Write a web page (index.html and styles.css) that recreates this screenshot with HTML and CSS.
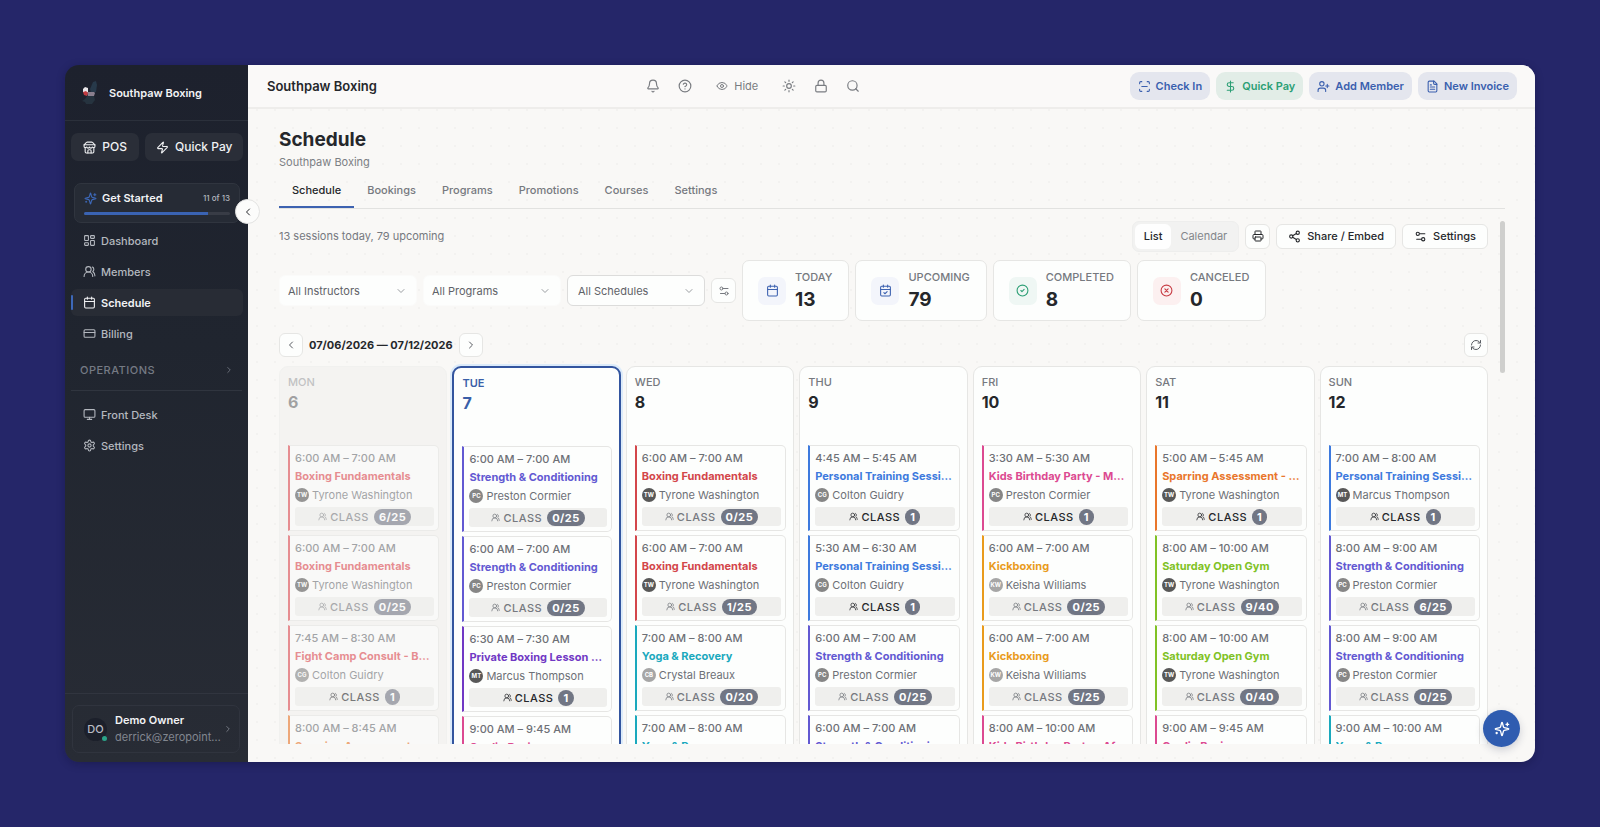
FILE: index.html
```html
<!DOCTYPE html>
<html lang="en">
<head>
<meta charset="utf-8">
<title>Schedule – Southpaw Boxing</title>
<link rel="stylesheet" href="styles.css">
</head>
<body>
<svg class="sprite" aria-hidden="true">
  <symbol id="i-store" viewBox="0 0 24 24"><path d="m2 7 4.41-4.41A2 2 0 0 1 7.83 2h8.34a2 2 0 0 1 1.42.59L22 7"/><path d="M4 12v8a2 2 0 0 0 2 2h12a2 2 0 0 0 2-2v-8"/><path d="M15 22v-4a2 2 0 0 0-2-2h-2a2 2 0 0 0-2 2v4"/><path d="M2 7h20v3a2 2 0 0 1-2 2 2.7 2.7 0 0 1-2.7-1 2.7 2.7 0 0 1-5.3 0 2.7 2.7 0 0 1-5.3 0A2.7 2.7 0 0 1 4 12a2 2 0 0 1-2-2z"/></symbol>
  <symbol id="i-zap" viewBox="0 0 24 24"><path d="M4 14a1 1 0 0 1-.78-1.63l9.9-10.2a.5.5 0 0 1 .86.46l-1.92 6.02A1 1 0 0 0 13 10h7a1 1 0 0 1 .78 1.63l-9.9 10.2a.5.5 0 0 1-.86-.46l1.92-6.02A1 1 0 0 0 11 14z"/></symbol>
  <symbol id="i-sparkles" viewBox="0 0 24 24"><path d="M9.94 15.5A2 2 0 0 0 8.5 14.06l-6.14-1.58a.5.5 0 0 1 0-.96L8.5 9.94A2 2 0 0 0 9.94 8.5l1.58-6.14a.5.5 0 0 1 .96 0l1.58 6.14a2 2 0 0 0 1.44 1.44l6.14 1.58a.5.5 0 0 1 0 .96l-6.14 1.58a2 2 0 0 0-1.44 1.44l-1.58 6.14a.5.5 0 0 1-.96 0z"/><path d="M20 3v4M22 5h-4M4 17v2M5 18H3"/></symbol>
  <symbol id="i-grid" viewBox="0 0 24 24"><rect x="3" y="3" width="7" height="9" rx="1"/><rect x="14" y="3" width="7" height="5" rx="1"/><rect x="14" y="12" width="7" height="9" rx="1"/><rect x="3" y="16" width="7" height="5" rx="1"/></symbol>
  <symbol id="i-users" viewBox="0 0 24 24"><path d="M18 21a8 8 0 0 0-16 0"/><circle cx="10" cy="8" r="5"/><path d="M22 20c0-3.370-2-6.500-4-8a5 5 0 0 0-.45-8.300"/></symbol>
  <symbol id="i-calendar" viewBox="0 0 24 24"><path d="M8 2v4M16 2v4M3 10h18"/><rect x="3" y="4" width="18" height="18" rx="2"/></symbol>
  <symbol id="i-calcheck" viewBox="0 0 24 24"><path d="M8 2v4M16 2v4M3 10h18M9 16l2 2 4-4"/><rect x="3" y="4" width="18" height="18" rx="2"/></symbol>
  <symbol id="i-card" viewBox="0 0 24 24"><rect x="2" y="5" width="20" height="14" rx="2"/><path d="M2 10h20"/></symbol>
  <symbol id="i-monitor" viewBox="0 0 24 24"><rect x="2" y="3" width="20" height="14" rx="2"/><path d="M8 21h8M12 17v4"/></symbol>
  <symbol id="i-gear" viewBox="0 0 24 24"><path d="M12.220 2h-.44a2 2 0 0 0-2 2v.18a2 2 0 0 1-1 1.730l-.43.25a2 2 0 0 1-2 0l-.15-.08a2 2 0 0 0-2.730.73l-.22.380a2 2 0 0 0 .73 2.730l.15.1a2 2 0 0 1 1 1.720v.51a2 2 0 0 1-1 1.740l-.15.090a2 2 0 0 0-.73 2.730l.22.380a2 2 0 0 0 2.730.73l.15-.08a2 2 0 0 1 2 0l.43.25a2 2 0 0 1 1 1.730V20a2 2 0 0 0 2 2h.44a2 2 0 0 0 2-2v-.18a2 2 0 0 1 1-1.730l.43-.25a2 2 0 0 1 2 0l.15.080a2 2 0 0 0 2.730-.73l.22-.390a2 2 0 0 0-.73-2.730l-.15-.08a2 2 0 0 1-1-1.740v-.5a2 2 0 0 1 1-1.740l.15-.090a2 2 0 0 0 .73-2.730l-.22-.380a2 2 0 0 0-2.730-.73l-.15.080a2 2 0 0 1-2 0l-.43-.25a2 2 0 0 1-1-1.730V4a2 2 0 0 0-2-2z"/><circle cx="12" cy="12" r="3"/></symbol>
  <symbol id="i-right" viewBox="0 0 24 24"><path d="m9 18 6-6-6-6"/></symbol>
  <symbol id="i-left" viewBox="0 0 24 24"><path d="m15 18-6-6 6-6"/></symbol>
  <symbol id="i-down" viewBox="0 0 24 24"><path d="m6 9 6 6 6-6"/></symbol>
  <symbol id="i-bell" viewBox="0 0 24 24"><path d="M10.270 21a2 2 0 0 0 3.460 0"/><path d="M3.260 15.330A1 1 0 0 0 4 17h16a1 1 0 0 0 .74-1.670C19.410 13.960 18 12.500 18 8A6 6 0 0 0 6 8c0 4.500-1.410 5.960-2.740 7.330"/></symbol>
  <symbol id="i-help" viewBox="0 0 24 24"><circle cx="12" cy="12" r="10"/><path d="M9.090 9a3 3 0 0 1 5.830 1c0 2-3 3-3 3M12 17h.01"/></symbol>
  <symbol id="i-eye" viewBox="0 0 24 24"><path d="M2.060 12.350a1 1 0 0 1 0-.7 10.750 10.750 0 0 1 19.880 0 1 1 0 0 1 0 .7 10.750 10.750 0 0 1-19.880 0"/><circle cx="12" cy="12" r="3"/></symbol>
  <symbol id="i-sun" viewBox="0 0 24 24"><circle cx="12" cy="12" r="4"/><path d="M12 2v2M12 20v2M4.900 4.900l1.400 1.400M17.700 17.700l1.400 1.400M2 12h2M20 12h2M6.300 17.700l-1.400 1.400M19.100 4.900l-1.400 1.400"/></symbol>
  <symbol id="i-lock" viewBox="0 0 24 24"><rect x="3" y="11" width="18" height="11" rx="2"/><path d="M7 11V7a5 5 0 0 1 10 0v4"/></symbol>
  <symbol id="i-search" viewBox="0 0 24 24"><circle cx="11" cy="11" r="8"/><path d="m21 21-4.300-4.300"/></symbol>
  <symbol id="i-scan" viewBox="0 0 24 24"><path d="M3 7V5a2 2 0 0 1 2-2h2M17 3h2a2 2 0 0 1 2 2v2M21 17v2a2 2 0 0 1-2 2h-2M7 21H5a2 2 0 0 1-2-2v-2M7 12h10"/></symbol>
  <symbol id="i-dollar" viewBox="0 0 24 24"><path d="M12 2v20M17 5H9.500a3.500 3.500 0 0 0 0 7h5a3.500 3.500 0 0 1 0 7H6"/></symbol>
  <symbol id="i-userplus" viewBox="0 0 24 24"><path d="M16 21v-2a4 4 0 0 0-4-4H6a4 4 0 0 0-4 4v2"/><circle cx="9" cy="7" r="4"/><path d="M19 8v6M22 11h-6"/></symbol>
  <symbol id="i-file" viewBox="0 0 24 24"><path d="M15 2H6a2 2 0 0 0-2 2v16a2 2 0 0 0 2 2h12a2 2 0 0 0 2-2V7z"/><path d="M14 2v4a2 2 0 0 0 2 2h4M10 9H8M16 13H8M16 17H8"/></symbol>
  <symbol id="i-printer" viewBox="0 0 24 24"><path d="M6 18H4a2 2 0 0 1-2-2v-5a2 2 0 0 1 2-2h16a2 2 0 0 1 2 2v5a2 2 0 0 1-2 2h-2"/><path d="M6 9V3a1 1 0 0 1 1-1h10a1 1 0 0 1 1 1v6"/><rect x="6" y="14" width="12" height="8" rx="1"/></symbol>
  <symbol id="i-share" viewBox="0 0 24 24"><circle cx="18" cy="5" r="3"/><circle cx="6" cy="12" r="3"/><circle cx="18" cy="19" r="3"/><path d="m8.590 13.510 6.830 3.980M15.410 6.510l-6.820 3.980"/></symbol>
  <symbol id="i-sliders" viewBox="0 0 24 24"><path d="M20 7h-9M14 17H5"/><circle cx="17" cy="17" r="3"/><circle cx="7" cy="7" r="3"/></symbol>
  <symbol id="i-ok" viewBox="0 0 24 24"><circle cx="12" cy="12" r="10"/><path d="m9 12 2 2 4-4"/></symbol>
  <symbol id="i-no" viewBox="0 0 24 24"><circle cx="12" cy="12" r="10"/><path d="m15 9-6 6M9 9l6 6"/></symbol>
  <symbol id="i-refresh" viewBox="0 0 24 24"><path d="M3 12a9 9 0 0 1 9-9 9.750 9.750 0 0 1 6.740 2.740L21 8M21 3v5h-5M21 12a9 9 0 0 1-9 9 9.750 9.750 0 0 1-6.740-2.740L3 16M8 16H3v5"/></symbol>
</svg>

<div class="app">
  <aside class="sidebar">
    <div class="brand">
      <svg class="brand-logo" viewBox="0 0 18 24" aria-hidden="true">
        <path class="logo-dark" d="M9 8 12 1l3-1 1 4-1 7-5 1z"/>
        <path class="logo-mid" d="M1 20l3-2 3-4 6 1 1 4-3 4H5l-1-2z"/>
        <path class="logo-light" d="M2 8l2-2 3 1v4l-2 1-3-1z"/>
        <path class="logo-pink" d="M6 11h7l1 1-1 3H7z"/>
        <path class="logo-red" d="M2 11l3-1 2 2-1 3-3-1z"/>
      </svg>
      <span class="brand-name">Southpaw Boxing</span>
    </div>
    <div class="quick">
      <button class="quick-btn"><svg class="ic ic-13"><use href="#i-store"/></svg>POS</button>
      <button class="quick-btn quick-wide"><svg class="ic ic-13"><use href="#i-zap"/></svg>Quick Pay</button>
    </div>
    <div class="started">
      <div class="started-row"><svg class="ic ic-13 accent"><use href="#i-sparkles"/></svg><span>Get Started</span><small>11 of 13</small></div>
      <div class="progress"><div class="progress-fill" style="width:85%"></div></div>
    </div>
    <nav class="nav">
      <a class="nav-item" href="#"><svg class="ic ic-13"><use href="#i-grid"/></svg>Dashboard</a>
      <a class="nav-item" href="#"><svg class="ic ic-13"><use href="#i-users"/></svg>Members</a>
      <a class="nav-item active" href="#"><svg class="ic ic-13"><use href="#i-calendar"/></svg>Schedule</a>
      <a class="nav-item" href="#"><svg class="ic ic-13"><use href="#i-card"/></svg>Billing</a>
    </nav>
    <button class="nav-group">OPERATIONS<svg class="ic ic-10"><use href="#i-right"/></svg></button>
    <nav class="nav nav-second">
      <a class="nav-item" href="#"><svg class="ic ic-13"><use href="#i-monitor"/></svg>Front Desk</a>
      <a class="nav-item" href="#"><svg class="ic ic-13"><use href="#i-gear"/></svg>Settings</a>
    </nav>
    <div class="account">
      <button class="account-card">
        <span class="account-avatar">DO</span>
        <span class="account-text"><b>Demo Owner</b><span>derrick@zeropoint.dev</span></span>
        <svg class="ic ic-10"><use href="#i-right"/></svg>
      </button>
    </div>
    <button class="collapse" aria-label="Collapse sidebar"><svg class="ic ic-12"><use href="#i-left"/></svg></button>
  </aside>

  <div class="main">
    <header class="topbar">
      <span class="topbar-title">Southpaw Boxing</span>
      <div class="tools">
        <button class="tool" aria-label="Notifications"><svg class="ic ic-14"><use href="#i-bell"/></svg></button>
        <button class="tool" aria-label="Help"><svg class="ic ic-14"><use href="#i-help"/></svg></button>
        <button class="tool tool-text"><svg class="ic ic-12"><use href="#i-eye"/></svg>Hide</button>
        <button class="tool" aria-label="Theme"><svg class="ic ic-14"><use href="#i-sun"/></svg></button>
        <button class="tool" aria-label="Lock"><svg class="ic ic-14"><use href="#i-lock"/></svg></button>
        <button class="tool" aria-label="Search"><svg class="ic ic-14"><use href="#i-search"/></svg></button>
      </div>
      <div class="actions">
        <button class="action"><svg class="ic ic-13"><use href="#i-scan"/></svg>Check In</button>
        <button class="action action-green"><svg class="ic ic-13"><use href="#i-dollar"/></svg>Quick Pay</button>
        <button class="action"><svg class="ic ic-13"><use href="#i-userplus"/></svg>Add Member</button>
        <button class="action"><svg class="ic ic-13"><use href="#i-file"/></svg>New Invoice</button>
      </div>
    </header>

    <main class="page">
      <h1 class="page-title">Schedule</h1>
      <p class="page-sub">Southpaw Boxing</p>
      <div class="tabs" role="tablist">
        <button class="tab selected" role="tab" aria-selected="true">Schedule</button>
        <button class="tab" role="tab">Bookings</button>
        <button class="tab" role="tab">Programs</button>
        <button class="tab" role="tab">Promotions</button>
        <button class="tab" role="tab">Courses</button>
        <button class="tab" role="tab">Settings</button>
      </div>
      <div class="scroller">
        <div class="schedule">
          <div class="bar">
            <p class="summary">13 sessions today, 79 upcoming</p>
            <div class="toggle"><button class="toggle-btn on">List</button><button class="toggle-btn">Calendar</button></div>
            <button class="btn btn-icon" aria-label="Print"><svg class="ic ic-12"><use href="#i-printer"/></svg></button>
            <button class="btn"><svg class="ic ic-13"><use href="#i-share"/></svg>Share / Embed</button>
            <button class="btn"><svg class="ic ic-13"><use href="#i-sliders"/></svg>Settings</button>
          </div>
          <div class="filters">
            <div class="pick"><select aria-label="Instructor"><option>All Instructors</option></select><svg class="ic ic-12"><use href="#i-down"/></svg></div>
            <div class="pick"><select aria-label="Program"><option>All Programs</option></select><svg class="ic ic-12"><use href="#i-down"/></svg></div>
            <div class="pick outlined"><select aria-label="Schedule"><option>All Schedules</option></select><svg class="ic ic-12"><use href="#i-down"/></svg></div>
            <button class="btn btn-icon muted" aria-label="Filters"><svg class="ic ic-12"><use href="#i-sliders"/></svg></button>
            <div class="stat"><span class="tile"><svg class="ic ic-13"><use href="#i-calendar"/></svg></span><div><div class="stat-label">TODAY</div><div class="stat-value">13</div></div></div>
            <div class="stat"><span class="tile"><svg class="ic ic-13"><use href="#i-calcheck"/></svg></span><div><div class="stat-label">UPCOMING</div><div class="stat-value">79</div></div></div>
            <div class="stat"><span class="tile tile-green"><svg class="ic ic-13"><use href="#i-ok"/></svg></span><div><div class="stat-label">COMPLETED</div><div class="stat-value">8</div></div></div>
            <div class="stat"><span class="tile tile-red"><svg class="ic ic-13"><use href="#i-no"/></svg></span><div><div class="stat-label">CANCELED</div><div class="stat-value">0</div></div></div>
          </div>
          <div class="dates">
            <button class="btn btn-step" aria-label="Previous week"><svg class="ic ic-12"><use href="#i-left"/></svg></button>
            <span class="range">07/06/2026 — 07/12/2026</span>
            <button class="btn btn-step" aria-label="Next week"><svg class="ic ic-12"><use href="#i-right"/></svg></button>
            <button class="btn btn-step push" aria-label="Refresh"><svg class="ic ic-12"><use href="#i-refresh"/></svg></button>
          </div>
          <div class="week">
            <section class="day past">
              <header class="day-head"><div class="day-name">MON</div><div class="day-num">6</div></header>
              <article class="card red"><div class="time">6:00 AM – 7:00 AM</div><div class="name">Boxing Fundamentals</div><div class="coach"><i class="av dark">TW</i>Tyrone Washington</div><div class="seats"><svg class="ic ic-9"><use href="#i-users"/></svg>CLASS<b>6/25</b></div></article>
              <article class="card red"><div class="time">6:00 AM – 7:00 AM</div><div class="name">Boxing Fundamentals</div><div class="coach"><i class="av dark">TW</i>Tyrone Washington</div><div class="seats"><svg class="ic ic-9"><use href="#i-users"/></svg>CLASS<b>0/25</b></div></article>
              <article class="card red"><div class="time">7:45 AM – 8:30 AM</div><div class="name">Fight Camp Consult - Boxing</div><div class="coach"><i class="av">CG</i>Colton Guidry</div><div class="seats solo"><svg class="ic ic-9"><use href="#i-users"/></svg>CLASS<b>1</b></div></article>
              <article class="card orange"><div class="time">8:00 AM – 8:45 AM</div><div class="name">Sparring Assessment</div><div class="coach"><i class="av dark">TW</i>Tyrone Washington</div><div class="seats solo"><svg class="ic ic-9"><use href="#i-users"/></svg>CLASS<b>1</b></div></article>
            </section>
            <section class="day today">
              <header class="day-head"><div class="day-name">TUE</div><div class="day-num">7</div></header>
              <article class="card indigo"><div class="time">6:00 AM – 7:00 AM</div><div class="name">Strength &amp; Conditioning</div><div class="coach"><i class="av">PC</i>Preston Cormier</div><div class="seats"><svg class="ic ic-9"><use href="#i-users"/></svg>CLASS<b>0/25</b></div></article>
              <article class="card indigo"><div class="time">6:00 AM – 7:00 AM</div><div class="name">Strength &amp; Conditioning</div><div class="coach"><i class="av">PC</i>Preston Cormier</div><div class="seats"><svg class="ic ic-9"><use href="#i-users"/></svg>CLASS<b>0/25</b></div></article>
              <article class="card purple"><div class="time">6:30 AM – 7:30 AM</div><div class="name">Private Boxing Lesson - Adult</div><div class="coach"><i class="av dark">MT</i>Marcus Thompson</div><div class="seats solo"><svg class="ic ic-9"><use href="#i-users"/></svg>CLASS<b>1</b></div></article>
              <article class="card pink"><div class="time">9:00 AM – 9:45 AM</div><div class="name">Cardio Boxing</div><div class="coach"><i class="av light">KW</i>Keisha Williams</div><div class="seats"><svg class="ic ic-9"><use href="#i-users"/></svg>CLASS<b>0/25</b></div></article>
            </section>
            <section class="day">
              <header class="day-head"><div class="day-name">WED</div><div class="day-num">8</div></header>
              <article class="card red"><div class="time">6:00 AM – 7:00 AM</div><div class="name">Boxing Fundamentals</div><div class="coach"><i class="av dark">TW</i>Tyrone Washington</div><div class="seats"><svg class="ic ic-9"><use href="#i-users"/></svg>CLASS<b>0/25</b></div></article>
              <article class="card red"><div class="time">6:00 AM – 7:00 AM</div><div class="name">Boxing Fundamentals</div><div class="coach"><i class="av dark">TW</i>Tyrone Washington</div><div class="seats"><svg class="ic ic-9"><use href="#i-users"/></svg>CLASS<b>1/25</b></div></article>
              <article class="card cyan"><div class="time">7:00 AM – 8:00 AM</div><div class="name">Yoga &amp; Recovery</div><div class="coach"><i class="av light">CB</i>Crystal Breaux</div><div class="seats"><svg class="ic ic-9"><use href="#i-users"/></svg>CLASS<b>0/20</b></div></article>
              <article class="card cyan"><div class="time">7:00 AM – 8:00 AM</div><div class="name">Yoga &amp; Recovery</div><div class="coach"><i class="av light">CB</i>Crystal Breaux</div><div class="seats"><svg class="ic ic-9"><use href="#i-users"/></svg>CLASS<b>0/20</b></div></article>
            </section>
            <section class="day">
              <header class="day-head"><div class="day-name">THU</div><div class="day-num">9</div></header>
              <article class="card blue"><div class="time">4:45 AM – 5:45 AM</div><div class="name">Personal Training Session - Adult</div><div class="coach"><i class="av">CG</i>Colton Guidry</div><div class="seats solo"><svg class="ic ic-9"><use href="#i-users"/></svg>CLASS<b>1</b></div></article>
              <article class="card blue"><div class="time">5:30 AM – 6:30 AM</div><div class="name">Personal Training Session - Adult</div><div class="coach"><i class="av">CG</i>Colton Guidry</div><div class="seats solo"><svg class="ic ic-9"><use href="#i-users"/></svg>CLASS<b>1</b></div></article>
              <article class="card indigo"><div class="time">6:00 AM – 7:00 AM</div><div class="name">Strength &amp; Conditioning</div><div class="coach"><i class="av">PC</i>Preston Cormier</div><div class="seats"><svg class="ic ic-9"><use href="#i-users"/></svg>CLASS<b>0/25</b></div></article>
              <article class="card indigo"><div class="time">6:00 AM – 7:00 AM</div><div class="name">Strength &amp; Conditioning</div><div class="coach"><i class="av">PC</i>Preston Cormier</div><div class="seats"><svg class="ic ic-9"><use href="#i-users"/></svg>CLASS<b>0/25</b></div></article>
            </section>
            <section class="day">
              <header class="day-head"><div class="day-name">FRI</div><div class="day-num">10</div></header>
              <article class="card pink"><div class="time">3:30 AM – 5:30 AM</div><div class="name">Kids Birthday Party - Morning</div><div class="coach"><i class="av">PC</i>Preston Cormier</div><div class="seats solo"><svg class="ic ic-9"><use href="#i-users"/></svg>CLASS<b>1</b></div></article>
              <article class="card amber"><div class="time">6:00 AM – 7:00 AM</div><div class="name">Kickboxing</div><div class="coach"><i class="av light">KW</i>Keisha Williams</div><div class="seats"><svg class="ic ic-9"><use href="#i-users"/></svg>CLASS<b>0/25</b></div></article>
              <article class="card amber"><div class="time">6:00 AM – 7:00 AM</div><div class="name">Kickboxing</div><div class="coach"><i class="av light">KW</i>Keisha Williams</div><div class="seats"><svg class="ic ic-9"><use href="#i-users"/></svg>CLASS<b>5/25</b></div></article>
              <article class="card pink"><div class="time">8:00 AM – 10:00 AM</div><div class="name">Kids Birthday Party - Afternoon</div><div class="coach"><i class="av">PC</i>Preston Cormier</div><div class="seats solo"><svg class="ic ic-9"><use href="#i-users"/></svg>CLASS<b>1</b></div></article>
            </section>
            <section class="day">
              <header class="day-head"><div class="day-name">SAT</div><div class="day-num">11</div></header>
              <article class="card orange"><div class="time">5:00 AM – 5:45 AM</div><div class="name">Sparring Assessment - Open</div><div class="coach"><i class="av dark">TW</i>Tyrone Washington</div><div class="seats solo"><svg class="ic ic-9"><use href="#i-users"/></svg>CLASS<b>1</b></div></article>
              <article class="card lime"><div class="time">8:00 AM – 10:00 AM</div><div class="name">Saturday Open Gym</div><div class="coach"><i class="av dark">TW</i>Tyrone Washington</div><div class="seats"><svg class="ic ic-9"><use href="#i-users"/></svg>CLASS<b>9/40</b></div></article>
              <article class="card lime"><div class="time">8:00 AM – 10:00 AM</div><div class="name">Saturday Open Gym</div><div class="coach"><i class="av dark">TW</i>Tyrone Washington</div><div class="seats"><svg class="ic ic-9"><use href="#i-users"/></svg>CLASS<b>0/40</b></div></article>
              <article class="card pink"><div class="time">9:00 AM – 9:45 AM</div><div class="name">Cardio Boxing</div><div class="coach"><i class="av light">KW</i>Keisha Williams</div><div class="seats"><svg class="ic ic-9"><use href="#i-users"/></svg>CLASS<b>0/25</b></div></article>
            </section>
            <section class="day">
              <header class="day-head"><div class="day-name">SUN</div><div class="day-num">12</div></header>
              <article class="card blue"><div class="time">7:00 AM – 8:00 AM</div><div class="name">Personal Training Session - Adult</div><div class="coach"><i class="av dark">MT</i>Marcus Thompson</div><div class="seats solo"><svg class="ic ic-9"><use href="#i-users"/></svg>CLASS<b>1</b></div></article>
              <article class="card indigo"><div class="time">8:00 AM – 9:00 AM</div><div class="name">Strength &amp; Conditioning</div><div class="coach"><i class="av">PC</i>Preston Cormier</div><div class="seats"><svg class="ic ic-9"><use href="#i-users"/></svg>CLASS<b>6/25</b></div></article>
              <article class="card indigo"><div class="time">8:00 AM – 9:00 AM</div><div class="name">Strength &amp; Conditioning</div><div class="coach"><i class="av">PC</i>Preston Cormier</div><div class="seats"><svg class="ic ic-9"><use href="#i-users"/></svg>CLASS<b>0/25</b></div></article>
              <article class="card cyan"><div class="time">9:00 AM – 10:00 AM</div><div class="name">Yoga &amp; Recovery</div><div class="coach"><i class="av light">CB</i>Crystal Breaux</div><div class="seats"><svg class="ic ic-9"><use href="#i-users"/></svg>CLASS<b>0/20</b></div></article>
            </section>
          </div>
        </div>
        <div class="thumb"></div>
      </div>
    </main>
  </div>
  <button class="fab" aria-label="Assistant"><svg class="ic ic-16"><use href="#i-sparkles"/></svg></button>
</div>
</body>
</html>
```
FILE: styles.css
```css
* { box-sizing: border-box; }
body {
  margin: 0;
  height: 100vh;
  padding: 65px;
  background: #252669;
  font: 11px/18px Inter, "Liberation Sans", sans-serif;
  color: #25272b;
}
h1, p { margin: 0; }
button, select { font: inherit; color: inherit; border: 0; background: none; padding: 0; margin: 0; }
button { display: flex; align-items: center; justify-content: center; white-space: nowrap; cursor: pointer; }
a { color: inherit; text-decoration: none; }

.sprite { position: absolute; width: 0; height: 0; }
.ic { flex: none; fill: none; stroke: currentColor; stroke-width: 2; stroke-linecap: round; stroke-linejoin: round; }
.ic-9 { width: 9px; height: 9px; }
.ic-10 { width: 10px; height: 10px; }
.ic-12 { width: 12px; height: 12px; }
.ic-13 { width: 13px; height: 13px; }
.ic-14 { width: 14px; height: 14px; }
.ic-16 { width: 16px; height: 16px; }

.app { position: relative; display: flex; height: 100%; border-radius: 14px; box-shadow: 0 2px 8px rgba(10, 10, 40, .3); }

/* Sidebar */
.sidebar { position: relative; flex: none; width: 183px; display: flex; flex-direction: column; border-radius: 14px 0 0 14px; background: linear-gradient(#1d212d, #20252f 40%, #282c35); color: #b4b8bf; }
.brand { display: flex; align-items: center; gap: 10px; height: 56px; padding: 0 16px; border-bottom: 1px solid #2b303b; }
.brand-logo { width: 18px; height: 24px; }
.brand-name { font-weight: 600; color: #f2f3f5; }
.logo-dark { fill: #27394a; }
.logo-mid { fill: #26333f; }
.logo-light { fill: #e9e6ea; }
.logo-pink { fill: #8a7f8e; }
.logo-red { fill: #c23a40; }
.quick { display: flex; gap: 6px; margin: 12px 5px 0 6px; }
.quick-btn { flex: 7 1 0; gap: 6px; height: 28px; border-radius: 7px; background: #2a2e38; color: #f0f1f3; font-size: 12px; font-weight: 500; }
.quick-wide { flex: 10 1 0; }
.started { margin: 22px 8px 0 9px; height: 40px; padding: 5px 9px; border: 1px solid #30353f; border-radius: 7px; background: #262b35; }
.started-row { display: flex; align-items: center; gap: 5px; color: #f2f3f5; font-weight: 600; }
.started-row small { margin-left: auto; font-size: 8px; font-weight: 500; color: #b4b8bf; }
.accent { color: #3d68b8; }
.progress { height: 3px; margin-top: 5px; border-radius: 2px; background: #383c46; overflow: hidden; }
.progress-fill { height: 100%; background: #3a63b3; }
.nav { display: flex; flex-direction: column; gap: 4px; margin: 4px 5px 0 6px; }
.nav-item { display: flex; align-items: center; gap: 5px; height: 27px; padding: 0 12px; border-radius: 6px; font-weight: 500; }
.nav-item.active { position: relative; background: #282c35; color: #f2f3f5; font-weight: 600; }
.nav-item.active::before { content: ""; position: absolute; left: 0; top: 6px; bottom: 6px; width: 2px; border-radius: 1px; background: #3d68b8; }
.nav-group { justify-content: space-between; margin: 12px 6px 0; height: 32px; padding: 0 8px 9px 9px; border-bottom: 1px solid #30353f; font-weight: 500; letter-spacing: .5px; color: #757a84; }
.nav-second { margin-top: 10px; }
.account { margin-top: auto; padding: 11px 8px 9px 7px; border-top: 1px solid #31353f; }
.account-card { width: 100%; height: 48px; padding: 0 6px 0 11px; border: 1px solid #30343e; border-radius: 7px; text-align: left; line-height: 17px; color: #81868f; }
.account-avatar { position: relative; flex: none; width: 23px; height: 23px; margin-right: 8px; border-radius: 50%; background: #1c202b; color: #b9bcc4; text-align: center; line-height: 23px; font-weight: 500; }
.account-avatar::after { content: ""; position: absolute; right: 0; bottom: 0; width: 5px; height: 5px; border-radius: 50%; background: #2ba388; }
.account-text { flex: 1; min-width: 0; display: flex; flex-direction: column; }
.account-text b { font-weight: 600; color: #f2f3f5; }
.account-text span { overflow: hidden; text-overflow: ellipsis; }
.collapse { position: absolute; right: -12px; top: 134px; width: 25px; height: 25px; border-radius: 50%; background: #fcfcfb; border: 1px solid #e3e3e2; color: #25272b; }

/* Top bar */
.main { flex: 1; min-width: 0; display: flex; flex-direction: column; border-radius: 0 14px 14px 0; background: radial-gradient(circle at 9px 9px, #f3f2f0 0, #f3f2f0 1px, transparent 1px) 0 0 / 18px 18px #f9f8f6; }
.topbar { flex: none; display: flex; align-items: center; justify-content: space-between; height: 44px; padding: 0 18px 0 19px; border-bottom: 2px solid #eeedeb; border-radius: 0 14px 0 0; background: #faf9f8; }
.topbar-title { font-size: 13px; font-weight: 600; }
.tools { display: flex; gap: 6px; color: #797c81; }
.tool { width: 26px; height: 26px; }
.tool-text { width: auto; padding: 0 12px; gap: 6px; }
.actions { display: flex; gap: 6px; }
.action { height: 28px; padding: 0 8px; gap: 5px; border-radius: 9px; background: #e4e6ee; color: #3a5fae; font-weight: 600; }
.action-green { background: #e2ede7; color: #2c9f75; }

/* Page */
.page { flex: 1; min-height: 0; display: flex; flex-direction: column; padding: 18px 30px 18px 31px; }
.page-title { font-size: 19px; line-height: 26px; font-weight: 700; }
.page-sub { color: #7c7f84; }
.tabs { display: flex; margin-top: 7px; border-bottom: 1px solid #e2e2e0; }
.tab { height: 30px; padding: 0 13px 5px; border-bottom: 2px solid transparent; color: #76797f; font-weight: 500; }
.tab.selected { color: #25272b; border-color: #3d62b0; }
.scroller { flex: 1; min-height: 0; display: flex; gap: 12px; padding-top: 12px; overflow: hidden; }
.schedule { flex: 1; min-width: 0; }
.thumb { flex: none; width: 5px; height: 29%; border-radius: 3px; background: #cfcfcd; }
.bar { display: flex; align-items: center; gap: 6px; height: 30px; }
.summary { flex: 1; color: #76797f; }
.toggle { display: flex; padding: 2px; border-radius: 7px; background: #f2f2f1; border: 1px solid #eeeeed; }
.toggle-btn { height: 25px; padding: 0 9px; border-radius: 6px; color: #83868b; }
.toggle-btn.on { background: #fefefe; color: #25272b; font-weight: 500; }
.btn { height: 25px; padding: 0 11px; gap: 6px; border: 1px solid #e6e6e4; border-radius: 6px; background: #fdfefd; font-weight: 500; }
.btn-icon { width: 25px; padding: 0; }
.muted { color: #76797f; }
.filters { display: flex; align-items: center; gap: 6px; margin-top: 9px; }
.pick { position: relative; flex: 0 1 138px; height: 31px; border-radius: 6px; background: #fdfefd; border: 1px solid #fbfbfa; color: #5f6268; }
.pick.outlined { border-color: #dcdcdb; }
.pick select { appearance: none; width: 100%; height: 100%; padding: 0 24px 0 8px; }
.pick.outlined select { padding-left: 10px; }
.pick .ic { position: absolute; right: 9px; top: 9px; pointer-events: none; color: #9a9da1; }
.stat { display: flex; align-items: center; gap: 9px; height: 61px; padding: 0 16px 0 15px; border: 1px solid #e6e6e4; border-radius: 7px; background: #fdfefd; }
.tile { display: flex; align-items: center; justify-content: center; width: 28px; height: 28px; border-radius: 7px; background: #f3f5fb; color: #3d62b0; }
.tile-green { background: #eff7f4; color: #2c9f75; }
.tile-red { background: #fcf0f0; color: #c73c44; }
.stat-label { font-weight: 500; line-height: 16px; color: #76797f; }
.stat-value { margin-top: 2px; font-size: 19px; line-height: 26px; font-weight: 700; }
.dates { display: flex; align-items: center; gap: 6px; margin-top: 12px; }
.btn-step { width: 24px; height: 24px; padding: 0; color: #5a5d63; }
.range { font-weight: 700; }
.push { margin-left: auto; }

/* Week grid */
.week { display: grid; grid-template-columns: repeat(7, minmax(0, 1fr)); gap: 5px; margin-top: 9px; }
.day { display: flex; flex-direction: column; gap: 4px; padding: 8px 7px 8px 8px; border: 1px solid #e6e6e4; border-radius: 9px; background: #fdfefd; }
.day-head { min-height: 66px; }
.day-name { font-weight: 500; line-height: 14px; color: #76797f; }
.day-num { margin-top: 3px; font-size: 16px; font-weight: 700; line-height: 20px; }
.today { border: 2px solid #33559f; box-shadow: 0 0 0 2px #dcebfa; }
.today .day-name, .today .day-num { color: #3a5fa8; }
.today .day-name { font-weight: 600; }
.past { border-color: #f1f1ef; background: #f4f3f1; }
.past > * { opacity: .6; }
.past .day-head { opacity: .4; }
.card { height: 86px; padding: 3px 4px 4px 5px; border: 1px solid #e6e6e4; border-left: 2px solid var(--tone); border-radius: 0 5px 5px 0; background: #fdfefd; }
.red { --tone: #d3464a; }
.past .red { --tone: #de4a52; }
.orange { --tone: #e9762b; }
.indigo { --tone: #6259d2; }
.purple { --tone: #7038c4; }
.pink { --tone: #dc4a91; }
.cyan { --tone: #1aa9bd; }
.blue { --tone: #3d7ade; }
.amber { --tone: #e99b1c; }
.lime { --tone: #80c225; }
.time { font-weight: 500; color: #6d7076; white-space: nowrap; }
.name { line-height: 19px; font-weight: 700; color: var(--tone); overflow: hidden; text-overflow: ellipsis; white-space: nowrap; }
.coach { display: flex; align-items: center; gap: 3px; color: #6d7076; white-space: nowrap; }
.av { flex: none; width: 14px; height: 14px; border-radius: 50%; background: #868686; color: #fff; font-size: 6px; font-style: normal; font-weight: 700; line-height: 14px; text-align: center; }
.av.dark { background: #585858; }
.av.light { background: #a6a6a6; }
.seats { display: flex; align-items: center; justify-content: center; gap: 3px; height: 19px; margin-top: 3px; border-radius: 3px; background: #efefed; font-weight: 500; letter-spacing: .5px; color: #76797f; }
.seats.solo { color: #25272b; }
.seats b { margin-left: 2px; padding: 0 5px; border-radius: 8px; background: #717684; color: #fff; font-weight: 700; line-height: 16px; }

.fab { position: absolute; right: 15px; bottom: 15px; width: 37px; height: 37px; border-radius: 50%; background: #2f5cb0; color: #fff; box-shadow: 0 3px 8px rgba(30, 40, 80, .2); }
```
